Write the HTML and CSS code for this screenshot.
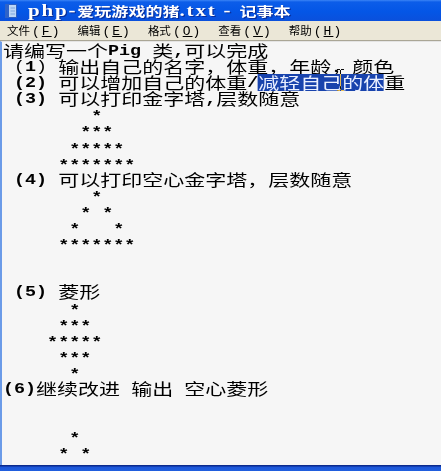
FILE: index.html
```html
<!DOCTYPE html>
<html lang="zh-CN">
<head>
<meta charset="utf-8">
<title>php-爱玩游戏的猪.txt - 记事本</title>
<link rel="stylesheet" href="styles.css">
</head>
<body>
<div class="window">
  <div class="titlebar">
    <svg class="app-icon" viewBox="0 0 14 16" width="14" height="16">
      <rect x="1.5" y="1.5" width="11" height="13" fill="#bcd6f6" stroke="#2d5fc0"/>
      <rect x="1" y="1" width="4" height="14" fill="#2f63c8"/>
      <path d="M6.5 5h4.5M6.5 8h4.5M6.5 11h4.5" stroke="#7fa6de" stroke-width="1"/>
    </svg>
    <span class="title"><span class="t-lat">php-</span>爱玩游戏的猪<span class="t-lat">.txt - </span>记事本</span>
  </div>
  <div class="menubar">
    <span class="menu-item"><span class="menu-zh">文件</span><span class="menu-key">(<u>F</u>)</span></span>
    <span class="menu-item"><span class="menu-zh">编辑</span><span class="menu-key">(<u>E</u>)</span></span>
    <span class="menu-item"><span class="menu-zh">格式</span><span class="menu-key">(<u>O</u>)</span></span>
    <span class="menu-item"><span class="menu-zh">查看</span><span class="menu-key">(<u>V</u>)</span></span>
    <span class="menu-item"><span class="menu-zh">帮助</span><span class="menu-key">(<u>H</u>)</span></span>
  </div>
  <div class="editor">
    <div class="doc">
      <div class="line">请编写一个<span class="lat">Pig </span>类<span class="lat">,</span>可以完成</div>
      <div class="line"><span class="lat"> <span class="thin">(</span>1<span class="thin">)</span> </span>输出自己的名字，体重，年龄，颜色</div>
      <div class="line"><span class="lat"> (2) </span>可以增加自己的体重<span class="lat">/</span><span class="sel">减轻自己的体</span>重</div>
      <div class="line"><span class="lat"> (3) </span>可以打印金字塔<span class="lat">,</span>层数随意</div>
      <div class="line"><span class="lat star">        *</span></div>
      <div class="line"><span class="lat star">       ***</span></div>
      <div class="line"><span class="lat star">      *****</span></div>
      <div class="line"><span class="lat star">     *******</span></div>
      <div class="line"><span class="lat"> (4) </span>可以打印空心金字塔，层数随意</div>
      <div class="line"><span class="lat star">        *</span></div>
      <div class="line"><span class="lat star">       * *</span></div>
      <div class="line"><span class="lat star">      *   *</span></div>
      <div class="line"><span class="lat star">     *******</span></div>
      <div class="line"></div>
      <div class="line"></div>
      <div class="line"><span class="lat"> (5) </span>菱形</div>
      <div class="line"><span class="lat star">      *</span></div>
      <div class="line"><span class="lat star">     ***</span></div>
      <div class="line"><span class="lat star">    *****</span></div>
      <div class="line"><span class="lat star">     ***</span></div>
      <div class="line"><span class="lat star">      *</span></div>
      <div class="line"><span class="lat">(6)</span>继续改进<span class="lat"> </span>输出<span class="lat"> </span>空心菱形</div>
      <div class="line"></div>
      <div class="line"></div>
      <div class="line"><span class="lat star">      *</span></div>
      <div class="line"><span class="lat star">     * *</span></div>
    </div>
    <svg class="ibeam" viewBox="0 0 7 22" width="7" height="22">
      <path d="M0 0.5h3M4 0.5h3M3.5 1v20M0 21.5h3M4 21.5h3" stroke="#ffffff" stroke-width="1" fill="none"/>
    </svg>
  </div>
  <div class="frame-bottom"></div>
</div>
</body>
</html>
```

FILE: styles.css
```css
html, body {
  margin: 0;
  padding: 0;
  background: #ffffff;
}

.window {
  width: 441px;
  height: 471px;
  display: flex;
  flex-direction: column;
  overflow: hidden;
}

/* ---------- title bar ---------- */
.titlebar {
  flex: none;
  height: 21px;
  display: flex;
  align-items: center;
  gap: 10px;
  padding-left: 4px;
  background: linear-gradient(#3b84f6 0, #0c5de9 2px, #0456e6 55%, #0a50dc 100%);
  overflow: hidden;
}

.app-icon {
  flex: none;
}

.title {
  display: inline-block;
  color: #ffffff;
  font-family: "Noto Sans CJK SC", sans-serif;
  font-weight: bold;
  font-size: 13px;
  line-height: 1;
  white-space: pre;
  transform: scaleX(1.31);
  transform-origin: 0 50%;
  text-shadow: 1px 1px 0 #0a2e9a;
}

.t-lat {
  font-family: "Liberation Serif", serif;
  font-size: 16px;
  letter-spacing: 1.4px;
}

/* ---------- menu bar ---------- */
.menubar {
  flex: none;
  height: 19px;
  display: flex;
  align-items: center;
  gap: 16px;
  padding-left: 7px;
  background: #ebe7d7;
  border-bottom: 1px solid #aaa696;
  color: #000000;
}

.menu-item {
  display: flex;
  align-items: baseline;
  gap: 2px;
}

.menu-zh {
  font-family: "Noto Sans CJK SC", sans-serif;
  font-size: 11.5px;
}

.menu-key {
  font-family: "Liberation Mono", monospace;
  font-size: 13px;
  letter-spacing: 2px;
}

/* ---------- editor ---------- */
.editor {
  flex: 1;
  position: relative;
  background: #f6f6f6;
  border-left: 2px solid #6b9be8;
  border-top: 1px solid #e4e4e4;
  padding-left: 1px;
  overflow: hidden;
}

.doc {
  font-family: "Noto Sans CJK SC", sans-serif;
  font-size: 16px;
  line-height: 16.1px;
  color: #000000;
  transform: scaleX(1.3125);
  transform-origin: 0 0;
}

.line {
  height: 16.1px;
  white-space: pre;
}

.lat {
  font-family: "Liberation Mono", monospace;
  font-weight: bold;
  font-size: 14px;
  line-height: 0;
  vertical-align: 2px;
}

.lat.star {
  vertical-align: 0;
}

.thin {
  font-weight: normal;
}

.sel {
  display: inline-block;
  vertical-align: top;
  height: 17px;
  background: #1843ad;
  color: #e9efff;
}

.ibeam {
  position: absolute;
  left: 335px;
  top: 27px;
  mix-blend-mode: difference;
}

.frame-bottom {
  flex: none;
  height: 6px;
  background: linear-gradient(#0b2a8e 0, #0b2a8e 1px, #1c56d8 2px, #2160de 100%);
}
```
